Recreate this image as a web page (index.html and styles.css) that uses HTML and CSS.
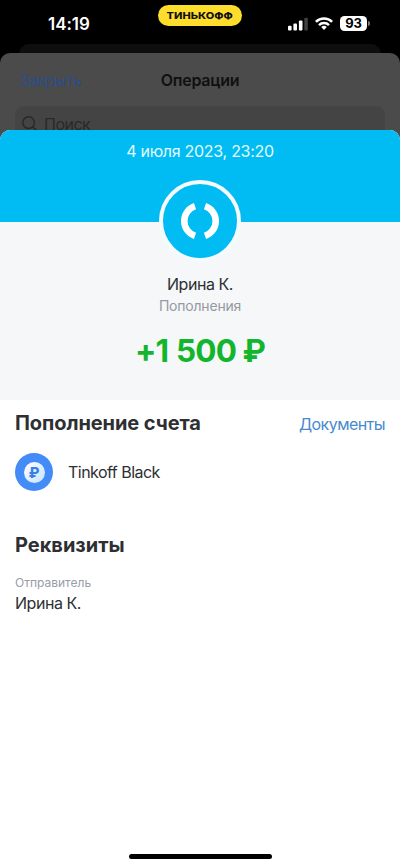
FILE: index.html
```html
<!DOCTYPE html>
<html lang="ru">
<head>
<meta charset="utf-8">
<meta name="viewport" content="width=device-width, initial-scale=1">
<title>Операция</title>
<link rel="stylesheet" href="styles.css">
</head>
<body>
<div class="phone">
  <header class="status">
    <span class="time">14:19</span>
    <span class="brand"><span class="brand-text">ТИНЬКОФФ</span></span>
    <div class="indicators">
      <svg class="signal" width="20" height="14" viewBox="0 0 20 14">
        <g fill="#fff"><rect x="0" y="8.8" width="3.6" height="4.6" rx="1"/><rect x="5.4" y="6.4" width="3.6" height="7" rx="1"/><rect x="10.9" y="3.4" width="3.6" height="10" rx="1"/></g>
        <rect x="16.3" y=".7" width="3.5" height="12.7" rx="1" fill="#414141"/>
      </svg>
      <svg class="wifi" width="18" height="13" viewBox="0 0 18 13">
        <g fill="none" stroke="#fff" stroke-width="2.5"><path d="M.9 4.9a11.5 11.5 0 0 1 16.2 0"/><path d="M4 8.1a7.1 7.1 0 0 1 10 0"/></g>
        <path d="M9 12.9 6.2 10a4 4 0 0 1 5.6 0z" fill="#fff"/>
      </svg>
      <span class="battery">93</span><span class="battery-cap"></span>
    </div>
  </header>
  <div class="rear-sheet"></div>
  <section class="back-sheet">
    <nav class="back-nav">
      <span class="close">Закрыть</span>
      <span class="back-title">Операции</span>
    </nav>
    <div class="search">
      <svg width="16" height="16" viewBox="0 0 16 16" fill="none" stroke="#292929" stroke-width="1.5" stroke-linecap="round"><circle cx="6.6" cy="6.6" r="5.8"/><path d="m10.9 10.9 4 4"/></svg>
      <span class="search-text">Поиск</span>
    </div>
  </section>
  <main class="sheet">
    <div class="cover"><span class="date">4 июля 2023, 23:20</span></div>
    <div class="summary">
      <div class="avatar">
        <svg width="40" height="40" viewBox="0 0 40 40" fill="none" stroke="#fff" stroke-width="6.6"><path d="M15 5.1A15.7 15.7 0 0 0 15 34.9"/><path d="M25 5.1A15.7 15.7 0 0 1 25 34.9"/></svg>
      </div>
      <span class="name">Ирина К.</span>
      <span class="category">Пополнения</span>
      <span class="amount">+1<span class="thousands">500</span>&nbsp;₽</span>
    </div>
    <section class="details">
      <div class="row-head"><h2 class="heading account-heading">Пополнение счета</h2><span class="docs">Документы</span></div>
      <div class="account">
        <span class="coin"><span class="coin-face">₽</span></span>
        <span class="account-name">Tinkoff Black</span>
      </div>
      <h2 class="heading req-heading">Реквизиты</h2>
      <span class="label">Отправитель</span>
      <span class="value">Ирина К.</span>
    </section>
    <div class="home"></div>
  </main>
</div>
</body>
</html>
```
FILE: styles.css
```css
* { box-sizing: border-box; }
body { margin: 0; background: #000; font-family: Inter, "Liberation Sans", sans-serif; color: #2d2f32; }
.phone { width: 400px; height: 866px; display: flex; flex-direction: column; background: #000; overflow: hidden; }
span { white-space: nowrap; }

.status { height: 44px; flex: none; display: grid; grid-template-columns: 158px 84px 158px; align-items: start; color: #fff; }
.time { margin: 14px 0 0 48px; font-size: 17px; line-height: 20px; font-weight: 600; letter-spacing: -.05px; }
.brand { margin-top: 5px; height: 21px; border-radius: 11px; background: #ffdd2d; color: #111; display: flex; align-items: center; justify-content: center; }
.brand-text { font-size: 9.2px; font-weight: 800; line-height: 21px; transform: scaleX(1.2); }
.indicators { display: flex; align-items: center; margin: 16px 0 0 46px; height: 15px; }
.wifi { margin-left: 7px; }
.battery { margin-left: 7px; width: 27px; height: 15px; border-radius: 4.5px; background: #fff; color: #000; font-size: 13px; line-height: 15px; font-weight: 700; text-align: center; letter-spacing: -.2px; }
.battery-cap { width: 2px; height: 5px; margin-left: 1px; border-radius: 0 2px 2px 0; background: #777; }

.rear-sheet { flex: none; height: 20px; margin: 0 19px -11px; border-radius: 10px 10px 0 0; background: #0e0e0e; }
.back-sheet { flex: none; height: 90px; border-radius: 10px 10px 0 0; background: #4b4b4b; position: relative; }
.back-nav { height: 53px; display: grid; grid-template-columns: 120px 160px 120px; align-items: center; font-size: 16px; }
.close { padding-left: 19px; color: #2b4d88; letter-spacing: -.5px; }
.back-title { text-align: center; color: #101010; font-weight: 600; letter-spacing: -.25px; }
.search { margin: 0 15px; height: 36px; border-radius: 9px 9px 0 0; background: #444; display: flex; align-items: center; padding-left: 7px; gap: 6px; color: #292929; font-size: 16px; letter-spacing: -.5px; }

.sheet { flex: 1; margin-top: -13px; position: relative; border-radius: 10px 10px 0 0; overflow: hidden; background: #fff; display: flex; flex-direction: column; }
.cover { flex: none; height: 92px; background: #00bcf2; text-align: center; padding-top: 11px; }
.date { color: #e4faff; font-size: 16px; line-height: 20px; letter-spacing: -.28px; }
.summary { flex: none; height: 178px; background: #f5f7f9; display: flex; flex-direction: column; align-items: center; }
.avatar { flex: none; width: 82px; height: 82px; margin-top: -42px; border: 4px solid #f5faff; border-radius: 50%; background: #00bcf2; display: flex; align-items: center; justify-content: center; }
.name { margin-top: 12px; font-size: 16px; line-height: 20px; letter-spacing: -.45px; }
.category { margin-top: 3px; font-size: 14px; line-height: 18px; color: #9699a0; letter-spacing: -.2px; }
.amount { margin-top: 16px; font-size: 31.5px; line-height: 40px; font-weight: 700; color: #13b52c; letter-spacing: -.9px; }
.thousands { margin-left: 8px; }

.details { padding: 0 15px; display: flex; flex-direction: column; }
.heading { margin: 0; font-size: 20px; line-height: 26px; font-weight: 700; letter-spacing: -.08px; }
.row-head { margin-top: 10px; display: flex; justify-content: space-between; align-items: center; }
.docs { color: #4889cf; font-size: 16px; line-height: 20px; padding-top: 2px; letter-spacing: -.55px; }
.account { margin-top: 17px; height: 38px; display: flex; align-items: center; gap: 15px; }
.coin { width: 38px; height: 38px; border-radius: 50%; background: #438bf6; display: flex; align-items: center; justify-content: center; }
.coin-face { width: 21px; height: 21px; border-radius: 50%; background: linear-gradient(135deg, #fff, #c7e2ff); color: #387fe8; font-size: 14px; line-height: 21px; font-weight: 800; text-align: center; }
.account-name { font-size: 16px; line-height: 20px; letter-spacing: -.52px; }
.req-heading { margin-top: 41px; letter-spacing: 0; }
.label { margin-top: 17px; font-size: 12px; line-height: 16px; color: #989ca7; }
.value { margin-top: 2px; font-size: 16px; line-height: 20px; letter-spacing: -.45px; }
.home { width: 143px; height: 5px; border-radius: 3px; background: #000; margin: auto auto 7px; }
```
